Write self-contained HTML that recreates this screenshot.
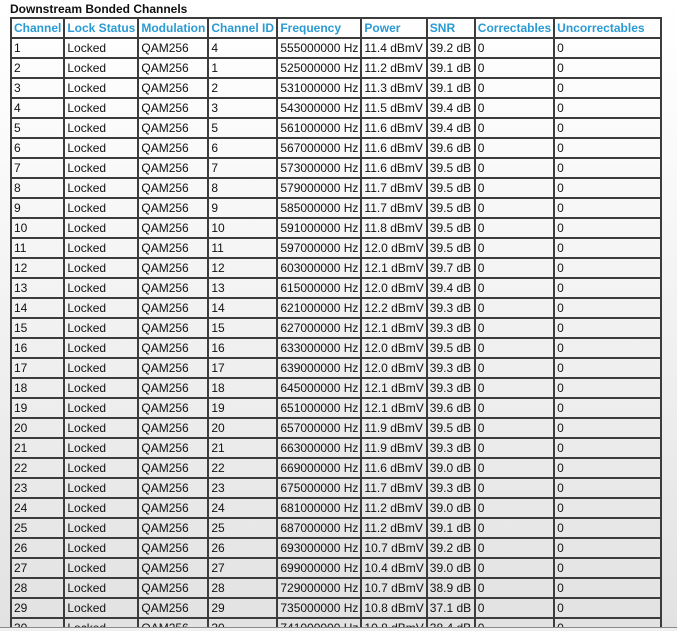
<!DOCTYPE html>
<html><head><meta charset="utf-8"><style>
html,body{margin:0;padding:0;width:677px;height:631px;overflow:hidden;background:#f0f0f0;}
#vp{position:absolute;left:0;top:0;width:677px;height:627px;overflow:hidden;background:linear-gradient(#ffffff 0px,#fafafa 150px,#e2e2e2 627px);}
#line{position:absolute;left:0;top:627px;width:677px;height:1px;background:#8a8a8a;}
#bot{position:absolute;left:0;top:628px;width:677px;height:3px;background:#f0f0f0;}
h3{position:absolute;left:10px;top:1px;margin:0;font:bold 12px/16px "Liberation Sans",Arial,sans-serif;color:#111;}
table{position:absolute;left:10px;top:17px;border-collapse:collapse;table-layout:fixed;font:12px "Liberation Sans",Arial,sans-serif;color:#111;border:2px solid #3c3c3c;}
td,th{border:2px solid #3c3c3c;height:18px;padding:0 2px;white-space:nowrap;overflow:hidden;text-align:left;font-weight:normal;line-height:16px;}
th{color:#2a9bd4;font-weight:bold;font-size:12px;}
</style></head><body>
<div id="vp">
<h3>Downstream Bonded Channels</h3>
<table>
<colgroup><col style="width:53px"><col style="width:74px"><col style="width:68px"><col style="width:69px"><col style="width:84px"><col style="width:65px"><col style="width:48px"><col style="width:78px"><col style="width:107px"></colgroup>
<tr><th>Channel</th><th>Lock Status</th><th>Modulation</th><th>Channel ID</th><th>Frequency</th><th>Power</th><th>SNR</th><th>Correctables</th><th>Uncorrectables</th></tr>
<tr><td>1</td><td>Locked</td><td>QAM256</td><td>4</td><td>555000000 Hz</td><td>11.4 dBmV</td><td>39.2 dB</td><td>0</td><td>0</td></tr>
<tr><td>2</td><td>Locked</td><td>QAM256</td><td>1</td><td>525000000 Hz</td><td>11.2 dBmV</td><td>39.1 dB</td><td>0</td><td>0</td></tr>
<tr><td>3</td><td>Locked</td><td>QAM256</td><td>2</td><td>531000000 Hz</td><td>11.3 dBmV</td><td>39.1 dB</td><td>0</td><td>0</td></tr>
<tr><td>4</td><td>Locked</td><td>QAM256</td><td>3</td><td>543000000 Hz</td><td>11.5 dBmV</td><td>39.4 dB</td><td>0</td><td>0</td></tr>
<tr><td>5</td><td>Locked</td><td>QAM256</td><td>5</td><td>561000000 Hz</td><td>11.6 dBmV</td><td>39.4 dB</td><td>0</td><td>0</td></tr>
<tr><td>6</td><td>Locked</td><td>QAM256</td><td>6</td><td>567000000 Hz</td><td>11.6 dBmV</td><td>39.6 dB</td><td>0</td><td>0</td></tr>
<tr><td>7</td><td>Locked</td><td>QAM256</td><td>7</td><td>573000000 Hz</td><td>11.6 dBmV</td><td>39.5 dB</td><td>0</td><td>0</td></tr>
<tr><td>8</td><td>Locked</td><td>QAM256</td><td>8</td><td>579000000 Hz</td><td>11.7 dBmV</td><td>39.5 dB</td><td>0</td><td>0</td></tr>
<tr><td>9</td><td>Locked</td><td>QAM256</td><td>9</td><td>585000000 Hz</td><td>11.7 dBmV</td><td>39.5 dB</td><td>0</td><td>0</td></tr>
<tr><td>10</td><td>Locked</td><td>QAM256</td><td>10</td><td>591000000 Hz</td><td>11.8 dBmV</td><td>39.5 dB</td><td>0</td><td>0</td></tr>
<tr><td>11</td><td>Locked</td><td>QAM256</td><td>11</td><td>597000000 Hz</td><td>12.0 dBmV</td><td>39.5 dB</td><td>0</td><td>0</td></tr>
<tr><td>12</td><td>Locked</td><td>QAM256</td><td>12</td><td>603000000 Hz</td><td>12.1 dBmV</td><td>39.7 dB</td><td>0</td><td>0</td></tr>
<tr><td>13</td><td>Locked</td><td>QAM256</td><td>13</td><td>615000000 Hz</td><td>12.0 dBmV</td><td>39.4 dB</td><td>0</td><td>0</td></tr>
<tr><td>14</td><td>Locked</td><td>QAM256</td><td>14</td><td>621000000 Hz</td><td>12.2 dBmV</td><td>39.3 dB</td><td>0</td><td>0</td></tr>
<tr><td>15</td><td>Locked</td><td>QAM256</td><td>15</td><td>627000000 Hz</td><td>12.1 dBmV</td><td>39.3 dB</td><td>0</td><td>0</td></tr>
<tr><td>16</td><td>Locked</td><td>QAM256</td><td>16</td><td>633000000 Hz</td><td>12.0 dBmV</td><td>39.5 dB</td><td>0</td><td>0</td></tr>
<tr><td>17</td><td>Locked</td><td>QAM256</td><td>17</td><td>639000000 Hz</td><td>12.0 dBmV</td><td>39.3 dB</td><td>0</td><td>0</td></tr>
<tr><td>18</td><td>Locked</td><td>QAM256</td><td>18</td><td>645000000 Hz</td><td>12.1 dBmV</td><td>39.3 dB</td><td>0</td><td>0</td></tr>
<tr><td>19</td><td>Locked</td><td>QAM256</td><td>19</td><td>651000000 Hz</td><td>12.1 dBmV</td><td>39.6 dB</td><td>0</td><td>0</td></tr>
<tr><td>20</td><td>Locked</td><td>QAM256</td><td>20</td><td>657000000 Hz</td><td>11.9 dBmV</td><td>39.5 dB</td><td>0</td><td>0</td></tr>
<tr><td>21</td><td>Locked</td><td>QAM256</td><td>21</td><td>663000000 Hz</td><td>11.9 dBmV</td><td>39.3 dB</td><td>0</td><td>0</td></tr>
<tr><td>22</td><td>Locked</td><td>QAM256</td><td>22</td><td>669000000 Hz</td><td>11.6 dBmV</td><td>39.0 dB</td><td>0</td><td>0</td></tr>
<tr><td>23</td><td>Locked</td><td>QAM256</td><td>23</td><td>675000000 Hz</td><td>11.7 dBmV</td><td>39.3 dB</td><td>0</td><td>0</td></tr>
<tr><td>24</td><td>Locked</td><td>QAM256</td><td>24</td><td>681000000 Hz</td><td>11.2 dBmV</td><td>39.0 dB</td><td>0</td><td>0</td></tr>
<tr><td>25</td><td>Locked</td><td>QAM256</td><td>25</td><td>687000000 Hz</td><td>11.2 dBmV</td><td>39.1 dB</td><td>0</td><td>0</td></tr>
<tr><td>26</td><td>Locked</td><td>QAM256</td><td>26</td><td>693000000 Hz</td><td>10.7 dBmV</td><td>39.2 dB</td><td>0</td><td>0</td></tr>
<tr><td>27</td><td>Locked</td><td>QAM256</td><td>27</td><td>699000000 Hz</td><td>10.4 dBmV</td><td>39.0 dB</td><td>0</td><td>0</td></tr>
<tr><td>28</td><td>Locked</td><td>QAM256</td><td>28</td><td>729000000 Hz</td><td>10.7 dBmV</td><td>38.9 dB</td><td>0</td><td>0</td></tr>
<tr><td>29</td><td>Locked</td><td>QAM256</td><td>29</td><td>735000000 Hz</td><td>10.8 dBmV</td><td>37.1 dB</td><td>0</td><td>0</td></tr>
<tr><td>30</td><td>Locked</td><td>QAM256</td><td>30</td><td>741000000 Hz</td><td>10.8 dBmV</td><td>38.4 dB</td><td>0</td><td>0</td></tr>
</table>
</div>
<div id="line"></div><div id="bot"></div>
</body></html>
